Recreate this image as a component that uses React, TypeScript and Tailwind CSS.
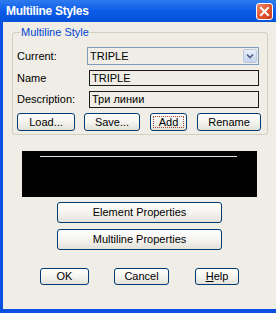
import React from "react";

const font = { fontFamily: '"Liberation Sans", Arial, sans-serif' };

function XpButton({
  label,
  className = "",
  focused = false,
}: {
  label: React.ReactNode;
  className?: string;
  focused?: boolean;
}) {
  return (
    <div
      className={`flex items-center justify-center rounded-[3px] border border-[#003C74] bg-gradient-to-b from-[#FFFFFF] via-[#F5F4EF] to-[#E3E1D8] text-[11px] text-black leading-none ${className}`}
    >
      {focused ? (
        <span className="flex h-[calc(100%-4px)] w-[calc(100%-4px)] items-center justify-center border border-dotted border-[#B0453A]">
          {label}
        </span>
      ) : (
        label
      )}
    </div>
  );
}

export default function App() {
  return (
    <div className="flex h-[313px] w-[276px] flex-col bg-[#0A4FE0]" style={font}>
      {/* title bar */}
      <div className="flex h-[22px] items-center bg-gradient-to-b from-[#2E7BF0] via-[#0A5BE8] to-[#0552D8] pl-[6px] pr-[3px]">
        <span className="flex-1 text-[12px] font-bold tracking-[-0.3px] text-white">Multiline Styles</span>
        <div className="flex h-[17px] w-[17px] items-center justify-center rounded-[3px] border border-white bg-gradient-to-br from-[#F08A66] via-[#E2552F] to-[#C83E1E]">
          <svg width="11" height="11" viewBox="0 0 11 11">
            <path d="M2 2 L9 9 M9 2 L2 9" stroke="white" strokeWidth="2" strokeLinecap="square" />
          </svg>
        </div>
      </div>

      {/* body */}
      <div className="ml-[3px] mb-[4px] flex flex-1 flex-col bg-[#EFEDE5]">
        {/* group box */}
        <div className="relative ml-[9px] mt-[10px] w-[256px] rounded-[3px] border border-[#D0CFC2] pb-[3px] pl-[4px] pt-[14px]">
          <span className="absolute -top-[7px] left-[7px] bg-[#EFEDE5] px-[1px] text-[11px] leading-[13px] text-[#0046D5]">
            Multiline Style
          </span>

          <div className="flex h-[18px] items-center">
            <span className="w-[70px] text-[11px] text-black">Current:</span>
            <div className="flex h-[18px] w-[172px] items-center border border-[#7F9DB9] bg-[#EFEDE5]">
              <span className="flex-1 pl-[2px] text-[11px] text-black">TRIPLE</span>
              <div className="mr-[1px] flex h-[14px] w-[14px] items-center justify-center rounded-[2px] border border-[#BAC8E2] bg-gradient-to-b from-[#E9EEF8] to-[#C6D3EE]">
                <svg width="8" height="6" viewBox="0 0 8 6">
                  <path d="M1 1.5 L4 4.5 L7 1.5" stroke="#4D6185" strokeWidth="1.6" fill="none" />
                </svg>
              </div>
            </div>
          </div>

          <div className="mt-[5px] flex h-[16px] items-center">
            <span className="w-[72px] text-[11px] text-black">Name</span>
            <div className="flex h-[16px] w-[170px] items-center border border-[#1A1A1A] pl-[2px] text-[11px] text-black">
              TRIPLE
            </div>
          </div>

          <div className="mt-[5px] flex h-[17px] items-center">
            <span className="w-[72px] text-[11px] text-black">Description:</span>
            <div className="flex h-[17px] w-[170px] items-center border border-[#1A1A1A] pl-[2px] text-[11px] text-black">
              Три линии
            </div>
          </div>

          <div className="mt-[5px] flex h-[18px] gap-[9px]">
            <XpButton label="Load..." className="w-[58px]" />
            <XpButton label="Save..." className="w-[56px]" />
            <XpButton label="Add" className="ml-[1px] w-[37px]" focused />
            <XpButton label="Rename" className="ml-[1px] w-[64px]" />
          </div>
        </div>

        {/* preview */}
        <div className="ml-[19px] mt-[16px] h-[46px] w-[235px] bg-[#030203] pt-[5px]">
          <div className="ml-[18px] h-px w-[197px] bg-[#E6E6E6]" />
        </div>

        <XpButton label="Element Properties" className="ml-[54px] mt-[5px] h-[21px] w-[165px]" />
        <XpButton label="Multiline Properties" className="ml-[54px] mt-[6px] h-[21px] w-[165px]" />

        <div className="ml-[37px] mt-[18px] flex h-[17px]">
          <XpButton label="OK" className="w-[49px]" />
          <XpButton label="Cancel" className="ml-[25px] w-[55px]" />
          <XpButton
            label={
              <span>
                <u>H</u>elp
              </span>
            }
            className="ml-[26px] w-[44px]"
          />
        </div>
      </div>
    </div>
  );
}
